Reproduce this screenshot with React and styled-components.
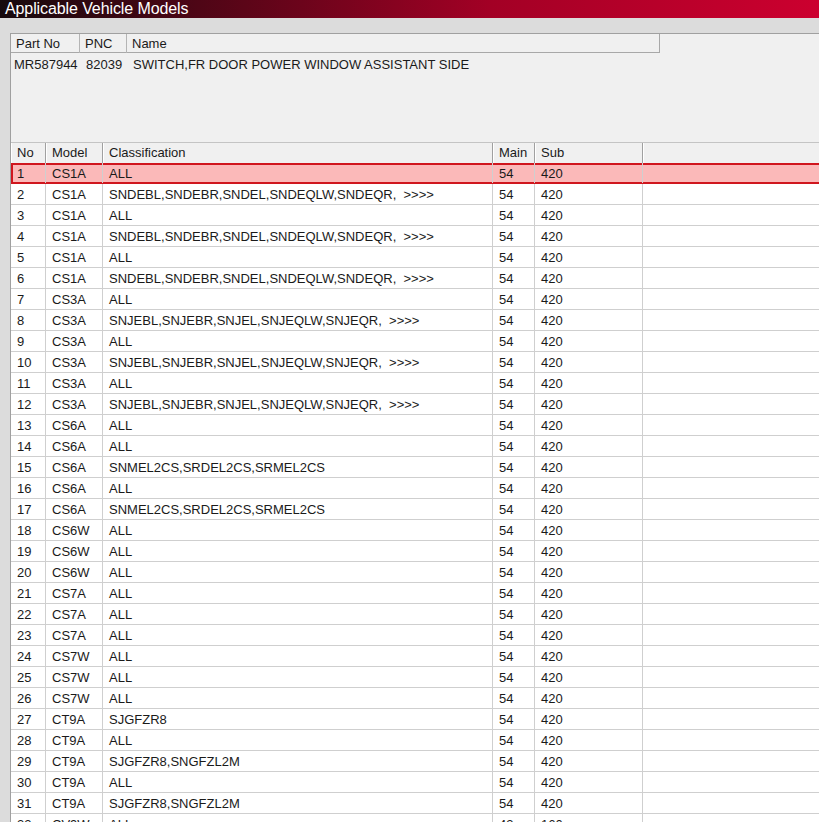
import React from "react";
import styled, { createGlobalStyle } from "styled-components";

const GlobalStyle = createGlobalStyle`
  html, body {
    margin: 0;
    padding: 0;
    background: #dcdcdc;
    overflow: hidden;
  }
  body {
    font-family: "Liberation Sans", Arial, sans-serif;
    font-size: 13px;
    color: #1a1a1a;
  }
`;

const Window = styled.div`
  width: 819px;
  height: 822px;
  overflow: hidden;
  background: #dcdcdc;
  display: flex;
  flex-direction: column;
`;

const TitleBar = styled.div`
  height: 18px;
  line-height: 17px;
  padding-left: 5px;
  color: #fff;
  font-size: 16px;
  letter-spacing: -0.1px;
  background: linear-gradient(90deg, #160a0d 0%, #5c0518 30%, #a30025 60%, #cc002f 100%);
  flex-shrink: 0;
`;

const Content = styled.div`
  padding: 15px 0 0 10px;
  display: flex;
  flex-direction: column;
  flex: 1;
  min-height: 0;
`;

/* --- part panel --- */

const PartPanel = styled.div`
  height: 108px;
  background: #f0f0f0;
  border-top: 1px solid #a0a0a0;
  border-left: 1px solid #a0a0a0;
  flex-shrink: 0;
`;

const PartHeader = styled.div`
  display: grid;
  grid-template-columns: 69px 47px 532px;
  width: 648px;
  height: 18px;
  border-right: 1px solid #a8a8a8;
  border-bottom: 1px solid #a8a8a8;
`;

const PartHeadCell = styled.div`
  padding-left: 5px;
  line-height: 19px;
  border-right: 1px solid #b4b4b4;
  &:last-child {
    border-right: none;
  }
`;

const PartRow = styled.div`
  display: grid;
  grid-template-columns: 69px 47px 1fr;
  height: 24px;
  line-height: 24px;
`;

const PartCell = styled.div`
  padding-left: ${p => p.$pad}px;
  white-space: nowrap;
`;

/* --- model table --- */

const Table = styled.div`
  flex: 1;
  min-height: 0;
  overflow: hidden;
  background: #fff;
  border-left: 1px solid #a0a0a0;
`;

const cols = "35px 57px 390px 42px 108px 1fr";

const HeadRow = styled.div`
  display: grid;
  grid-template-columns: ${cols};
  height: 20px;
  background: #f0f0f0;
  border-top: 1px solid #c4c4c4;
`;

const HeadCell = styled.div`
  padding-left: 6px;
  line-height: 20px;
  border-right: 1px solid #a0a0a0;
  box-shadow: inset 1px 0 0 #fff;
  &:last-child {
    border-right: none;
  }
`;

const Row = styled.div`
  display: grid;
  grid-template-columns: ${cols};
  height: 21px;
  box-sizing: border-box;
  border-bottom: 1px solid ${p => (p.$selected ? "#d0161e" : "#cfcfcf")};
  background: ${p => (p.$selected ? "#fbb9b9" : "#fff")};
  box-shadow: ${p =>
    p.$selected
      ? "inset 0 2px 0 #d0161e, inset 0 -1px 0 #d0161e, inset 2px 0 0 #d0161e"
      : "none"};
`;

const Cell = styled.div`
  padding-left: 6px;
  line-height: 21px;
  white-space: pre;
  overflow: hidden;
  border-right: 1px solid #cfcfcf;
  &:last-child {
    border-right: none;
  }
`;

const SND = "SNDEBL,SNDEBR,SNDEL,SNDEQLW,SNDEQR,  >>>>";
const SNJ = "SNJEBL,SNJEBR,SNJEL,SNJEQLW,SNJEQR,  >>>>";
const SNM = "SNMEL2CS,SRDEL2CS,SRMEL2CS";

const models = [
  ["CS1A", "ALL"],
  ["CS1A", SND],
  ["CS1A", "ALL"],
  ["CS1A", SND],
  ["CS1A", "ALL"],
  ["CS1A", SND],
  ["CS3A", "ALL"],
  ["CS3A", SNJ],
  ["CS3A", "ALL"],
  ["CS3A", SNJ],
  ["CS3A", "ALL"],
  ["CS3A", SNJ],
  ["CS6A", "ALL"],
  ["CS6A", "ALL"],
  ["CS6A", SNM],
  ["CS6A", "ALL"],
  ["CS6A", SNM],
  ["CS6W", "ALL"],
  ["CS6W", "ALL"],
  ["CS6W", "ALL"],
  ["CS7A", "ALL"],
  ["CS7A", "ALL"],
  ["CS7A", "ALL"],
  ["CS7W", "ALL"],
  ["CS7W", "ALL"],
  ["CS7W", "ALL"],
  ["CT9A", "SJGFZR8"],
  ["CT9A", "ALL"],
  ["CT9A", "SJGFZR8,SNGFZL2M"],
  ["CT9A", "ALL"],
  ["CT9A", "SJGFZR8,SNGFZL2M"],
  ["CV9W", "ALL", "43", "160"],
];

const App = () => (
  <Window>
    <GlobalStyle />
    <TitleBar>Applicable Vehicle Models</TitleBar>
    <Content>
      <PartPanel>
        <PartHeader>
          <PartHeadCell>Part No</PartHeadCell>
          <PartHeadCell>PNC</PartHeadCell>
          <PartHeadCell>Name</PartHeadCell>
        </PartHeader>
        <PartRow>
          <PartCell $pad={3}>MR587944</PartCell>
          <PartCell $pad={6}>82039</PartCell>
          <PartCell $pad={6}>SWITCH,FR DOOR POWER WINDOW ASSISTANT SIDE</PartCell>
        </PartRow>
      </PartPanel>

      <Table>
        <HeadRow>
          <HeadCell>No</HeadCell>
          <HeadCell>Model</HeadCell>
          <HeadCell>Classification</HeadCell>
          <HeadCell>Main</HeadCell>
          <HeadCell>Sub</HeadCell>
          <HeadCell />
        </HeadRow>
        {models.map(([model, cls, main = "54", sub = "420"], i) => (
          <Row key={i} $selected={i === 0}>
            <Cell>{i + 1}</Cell>
            <Cell>{model}</Cell>
            <Cell>{cls}</Cell>
            <Cell>{main}</Cell>
            <Cell>{sub}</Cell>
            <Cell />
          </Row>
        ))}
      </Table>
    </Content>
  </Window>
);

export default App;
